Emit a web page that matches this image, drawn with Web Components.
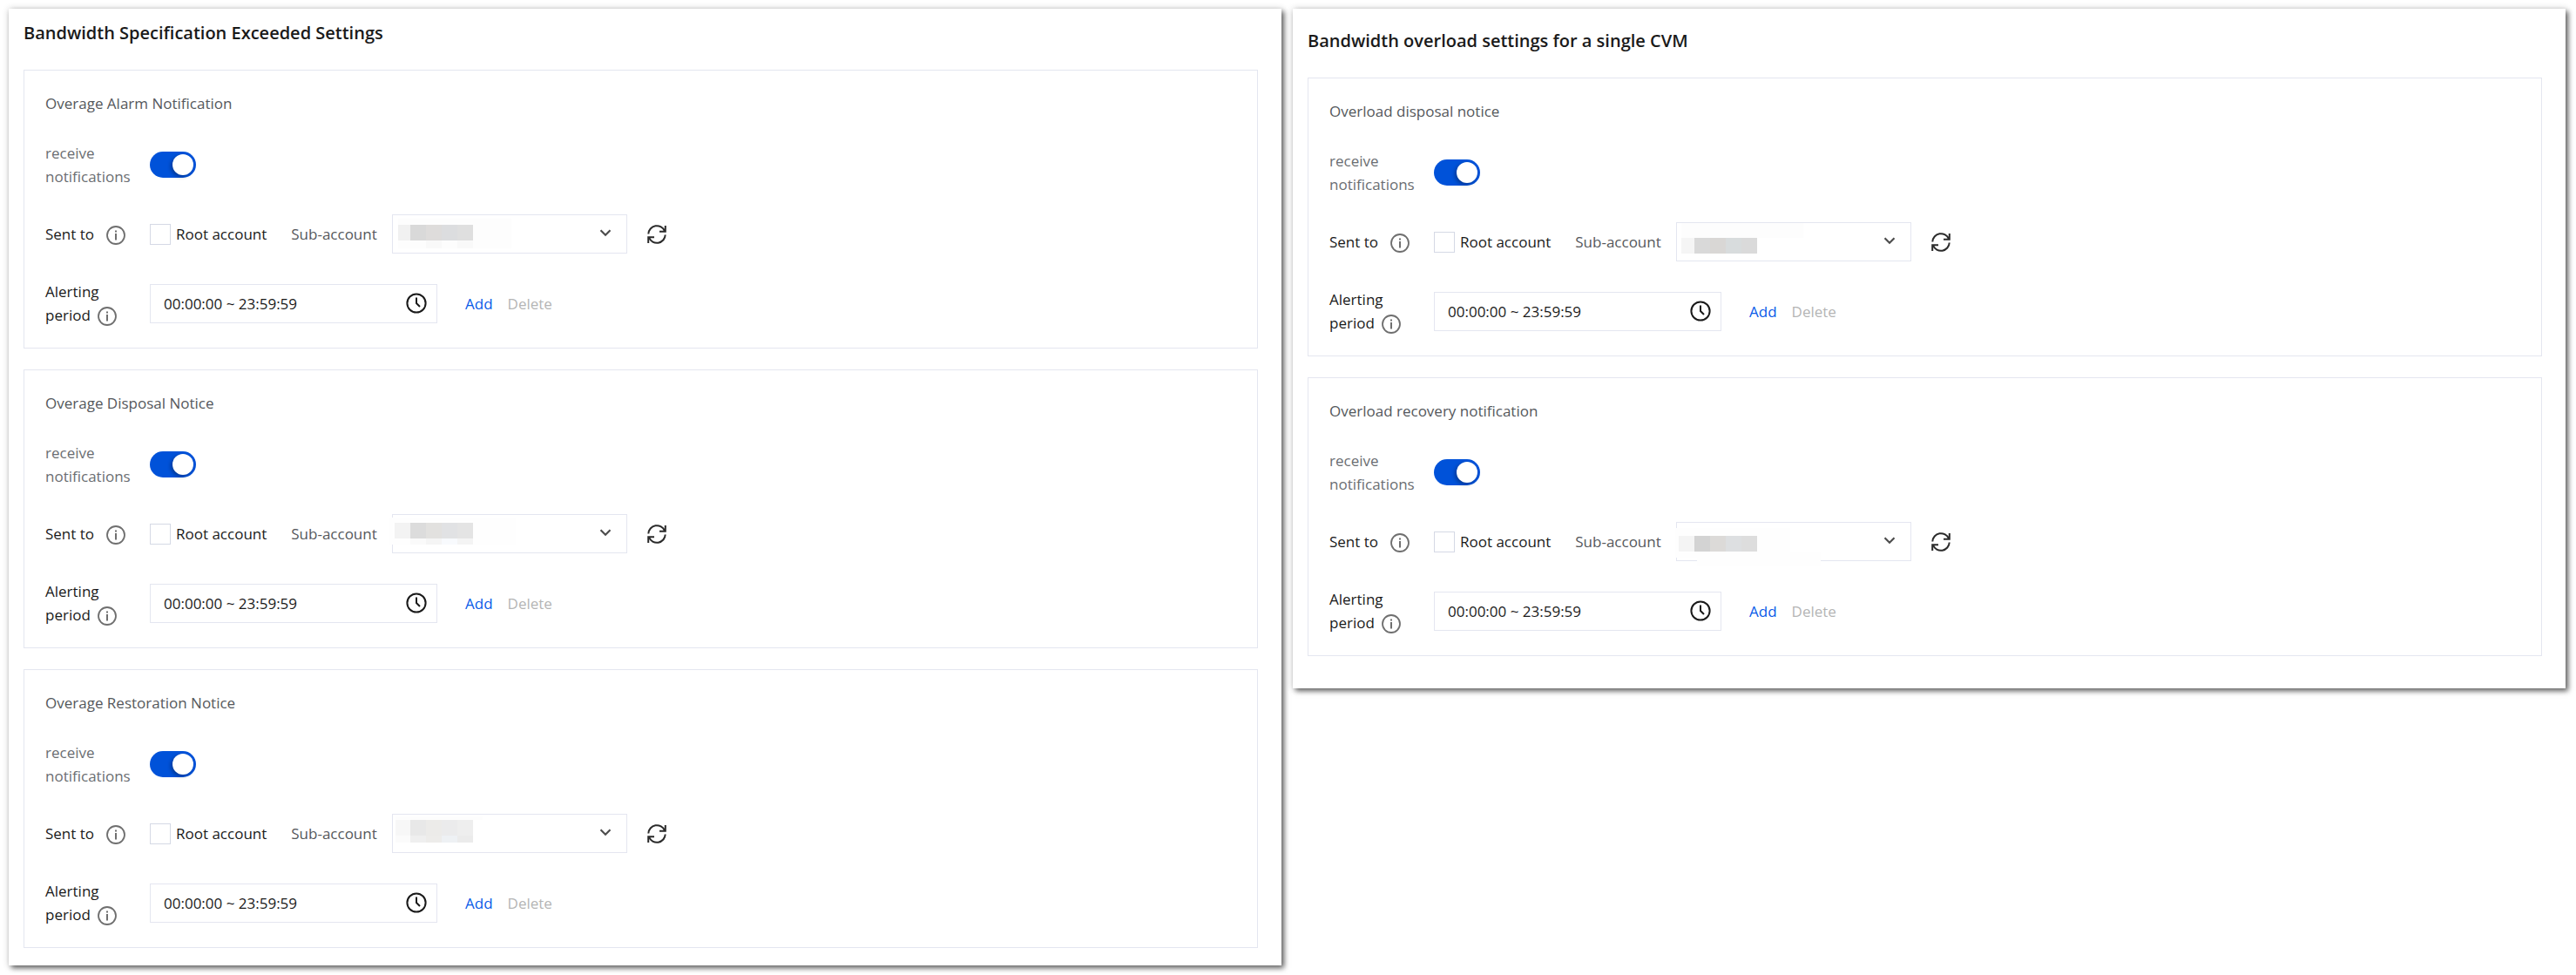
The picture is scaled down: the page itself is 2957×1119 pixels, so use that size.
<!DOCTYPE html>
<html lang="en">
<head>
<meta charset="utf-8">
<title>Bandwidth alert settings</title>
<style>
  body {
    margin: 0;
    background: #fff;
    color: #1a1a1a;
    font: 17px/27px "Open Sans", "Noto Sans", sans-serif;
    --blue: #0052d9;
    --line: #e4e6f0;
    --muted: #55585c;
  }
</style>
</head>
<body>

<settings-page>
  <settings-panel heading="Bandwidth Specification Exceeded Settings">
    <notice-card heading="Overage Alarm Notification" mosaic="alarm"></notice-card>
    <notice-card heading="Overage Disposal Notice" mosaic="disposal"></notice-card>
    <notice-card heading="Overage Restoration Notice" mosaic="restoration"></notice-card>
  </settings-panel>
  <settings-panel class="roomy" heading="Bandwidth overload settings for a single CVM">
    <notice-card heading="Overload disposal notice" mosaic="overload"></notice-card>
    <notice-card heading="Overload recovery notification" mosaic="recovery"></notice-card>
  </settings-panel>
</settings-page>

<script>
// Blocks that hide the sub-account name: x, y, width, height, colour
const MOSAICS = {
  alarm: [
    [7, 5, 130, 34, '#fdfdfd'],
    [7, 12, 14, 18, '#f1f1f1'], [21, 12, 18, 18, '#d9d9d9'], [39, 12, 18, 18, '#dedcdb'],
    [57, 12, 18, 18, '#dcdddf'], [75, 12, 18, 18, '#dfdfdf'],
    [39, 30, 18, 9, '#f9f9f9'], [75, 30, 18, 9, '#f9f9f9'],
  ],
  disposal: [
    [-3, 4, 145, 31, '#fefefe'],
    [3, 10, 18, 18, '#f3f3f3'], [21, 10, 18, 18, '#dcdcdc'], [39, 10, 18, 18, '#e2e1df'],
    [57, 10, 18, 18, '#e1e2e4'], [75, 10, 18, 18, '#e4e4e4'],
    [21, 28, 18, 7, '#fafafa'], [39, 28, 18, 7, '#f5f5f5'], [57, 28, 18, 7, '#f8fafd'], [75, 28, 18, 7, '#f4f4f4'],
  ],
  restoration: [
    [4, 3, 100, 4, '#fdfdfd'],
    [4, 7, 17, 18, '#f7f7f7'], [21, 7, 18, 18, '#e8e8e8'], [39, 7, 18, 18, '#ecebe9'],
    [57, 7, 18, 18, '#ebebec'], [75, 7, 18, 18, '#eeeeee'],
    [4, 25, 17, 8, '#fbfbfb'], [21, 25, 18, 8, '#efefef'], [39, 25, 18, 8, '#edecea'],
    [57, 25, 18, 8, '#eef1f4'], [75, 25, 18, 8, '#ebebeb'],
  ],
  overload: [
    [6, 1, 140, 17, '#fdfdfd'],
    [6, 18, 15, 18, '#f5f5f5'], [21, 18, 18, 18, '#d9d9d9'], [39, 18, 18, 18, '#d9d7d5'],
    [57, 18, 18, 18, '#d8dcdd'], [75, 18, 18, 18, '#dadada'],
  ],
  recovery: [
    [-1, 7, 132, 34, '#fefefe'], [24, 34, 142, 17, '#fefefe'],
    [3, 16, 18, 18, '#f4f4f4'], [21, 16, 18, 18, '#d3d3d3'], [39, 16, 18, 18, '#dcdad8'],
    [57, 16, 18, 18, '#dddfe1'], [75, 16, 18, 18, '#dddddd'],
  ],
};

class SettingsPage extends HTMLElement {
  constructor() {
    super();
    this.attachShadow({ mode: 'open' });
    this.shadowRoot.innerHTML = `
      <style>
        :host {
          display: grid;
          grid-template-columns: 1fr 1fr;
          align-items: start;
          gap: 13px;
          padding: 10px 12px 10px 10px;
        }
      </style>
      <slot></slot>
    `;
  }
}

class SettingsPanel extends HTMLElement {
  constructor() {
    super();
    this.attachShadow({ mode: 'open' });
    this.shadowRoot.innerHTML = `
      <style>
        :host {
          display: block;
          padding: 14px 27px 20px 17px;
          background: #fff;
          box-shadow: 3px 3px 6px rgba(0, 0, 0, .6), 0 0 8px rgba(0, 0, 0, .15);
        }
        :host(.roomy) {
          padding-top: 23px;
          padding-bottom: 37px;
        }
        h2 {
          margin: 0 0 29px;
          font-size: 20px;
          font-weight: 600;
          line-height: 27px;
        }
        .cards {
          display: grid;
          gap: 24px;
        }
      </style>
      <h2></h2>
      <div class="cards"><slot></slot></div>
    `;
  }

  connectedCallback() {
    this.shadowRoot.querySelector('h2').textContent = this.getAttribute('heading');
  }
}

class InfoIcon extends HTMLElement {
  constructor() {
    super();
    this.attachShadow({ mode: 'open' });
    this.shadowRoot.innerHTML = `
      <style>
        :host {
          display: inline-block;
          vertical-align: middle;
          width: 22px;
          height: 22px;
        }
        svg { display: block; }
      </style>
      <svg width="22" height="22" viewBox="0 0 22 22" fill="none" stroke="#6f6f6f" aria-hidden="true">
        <circle cx="11" cy="11" r="10" stroke-width="1.8"/>
        <path d="M11 9v7.500M11 5.500v2" stroke-width="2"/>
      </svg>
    `;
  }
}

class AccountSelect extends HTMLElement {
  constructor() {
    super();
    this.attachShadow({ mode: 'open' });
    this.shadowRoot.innerHTML = `
      <style>
        :host {
          display: flex;
          align-items: center;
          gap: 17px;
        }
        label { color: var(--muted); }
        .box {
          position: relative;
          width: 270px;
        }
        select {
          display: block;
          appearance: none;
          box-sizing: border-box;
          width: 100%;
          height: 45px;
          border: 1px solid var(--line);
          border-radius: 0;
          background: #fff;
        }
        svg {
          position: absolute;
          pointer-events: none;
        }
        .mosaic {
          left: 0;
          top: 0;
          overflow: visible;
        }
        .arrow {
          right: 18px;
          top: 17px;
        }
      </style>
      <label for="account">Sub-account</label>
      <div class="box">
        <select id="account"><option></option></select>
        <svg class="mosaic" width="170" height="45" shape-rendering="crispEdges"></svg>
        <svg class="arrow" width="14" height="9" viewBox="0 0 14 9" fill="none" stroke="#4d4d4d" stroke-width="2.200">
          <path d="M1.500 1.300 7 6.800l5.500-5.500"/>
        </svg>
      </div>
    `;
  }

  connectedCallback() {
    const blocks = MOSAICS[this.getAttribute('mosaic')] || [];
    this.shadowRoot.querySelector('.mosaic').innerHTML = blocks
      .map(([x, y, w, h, fill]) => `<rect x="${x}" y="${y}" width="${w}" height="${h}" fill="${fill}"/>`)
      .join('');
  }
}

class NoticeCard extends HTMLElement {
  constructor() {
    super();
    this.attachShadow({ mode: 'open' });
    this.shadowRoot.innerHTML = `
      <style>
        :host {
          display: grid;
          gap: 30px;
          padding: 24px;
          border: 1px solid var(--line);
        }
        h3 {
          margin: 0;
          font-size: 17px;
          font-weight: 400;
          line-height: 27px;
          color: var(--muted);
        }
        .row {
          display: grid;
          grid-template-columns: 100px 1fr;
          align-items: center;
          gap: 20px;
        }
        .name { display: block; }
        .name.soft { color: #6b6e72; }
        .name info-icon { margin-left: 4px; }
        .name.wide info-icon { margin-left: 10px; }
        .controls {
          display: flex;
          align-items: center;
        }
        input, button {
          margin: 0;
          padding: 0;
          font: inherit;
          color: inherit;
        }
        .switch {
          appearance: none;
          display: flex;
          box-sizing: border-box;
          justify-content: flex-end;
          width: 53px;
          height: 30px;
          padding: 3px;
          border-radius: 15px;
          background: var(--blue);
        }
        .switch:not(:checked) {
          justify-content: flex-start;
          background: #cfd5de;
        }
        .switch::before {
          content: "";
          width: 24px;
          height: 24px;
          border-radius: 50%;
          background: #fff;
          box-shadow: -2px 2px 4px rgba(0, 0, 0, .3);
        }
        .check {
          display: flex;
          align-items: center;
          gap: 6px;
          margin-right: 28px;
        }
        .check input {
          appearance: none;
          box-sizing: border-box;
          width: 24px;
          height: 24px;
          border: 1px solid #d5d9e5;
          background: #fff;
        }
        .time {
          display: flex;
          align-items: center;
          box-sizing: border-box;
          width: 330px;
          height: 45px;
          padding: 0 11px 0 15px;
          border: 1px solid var(--line);
        }
        .time input {
          flex: 1;
          min-width: 0;
          border: 0;
          outline: 0;
          background: none;
        }
        svg { display: block; }
        button {
          border: 0;
          background: none;
          cursor: pointer;
        }
        .refresh { margin-left: 23px; }
        .add {
          margin-left: 32px;
          color: #0a5be8;
        }
        .delete {
          margin-left: 17px;
          color: #b5b5b5;
        }
      </style>
      <h3></h3>
      <div class="row">
        <label class="name soft" for="receive">receive notifications</label>
        <div class="controls">
          <input class="switch" id="receive" type="checkbox" role="switch" checked>
        </div>
      </div>
      <div class="row">
        <span class="name wide">Sent to <info-icon></info-icon></span>
        <div class="controls">
          <label class="check"><input type="checkbox">Root account</label>
          <account-select></account-select>
          <button class="refresh" type="button" aria-label="Refresh">
            <svg width="22" height="22" viewBox="0 0 22 22" fill="none" stroke="#2b2b2b" stroke-width="2">
              <path d="M1.300 10.500A9.700 9.700 0 0 1 20 7.300M20.700 11.500A9.700 9.700 0 0 1 2 14.700"/>
              <path d="M20.800 1v6.800H14M1.200 21v-6.800H8"/>
            </svg>
          </button>
        </div>
      </div>
      <div class="row">
        <label class="name" for="period">Alerting period <info-icon></info-icon></label>
        <div class="controls">
          <div class="time">
            <input id="period" type="text" value="00:00:00 ~ 23:59:59">
            <svg width="24" height="24" viewBox="0 0 24 24" fill="none" stroke="#1a1a1a" stroke-width="2" aria-hidden="true">
              <circle cx="12" cy="12" r="10.600"/>
              <path d="M12 5.500V12l4 4"/>
            </svg>
          </div>
          <button class="add" type="button">Add</button>
          <button class="delete" type="button" disabled>Delete</button>
        </div>
      </div>
    `;
  }

  connectedCallback() {
    this.shadowRoot.querySelector('h3').textContent = this.getAttribute('heading');
    const account = document.createElement('account-select');
    account.setAttribute('mosaic', this.getAttribute('mosaic'));
    this.shadowRoot.querySelector('account-select').replaceWith(account);
  }
}

customElements.define('info-icon', InfoIcon);
customElements.define('account-select', AccountSelect);
customElements.define('notice-card', NoticeCard);
customElements.define('settings-panel', SettingsPanel);
customElements.define('settings-page', SettingsPage);
</script>
</body>
</html>
